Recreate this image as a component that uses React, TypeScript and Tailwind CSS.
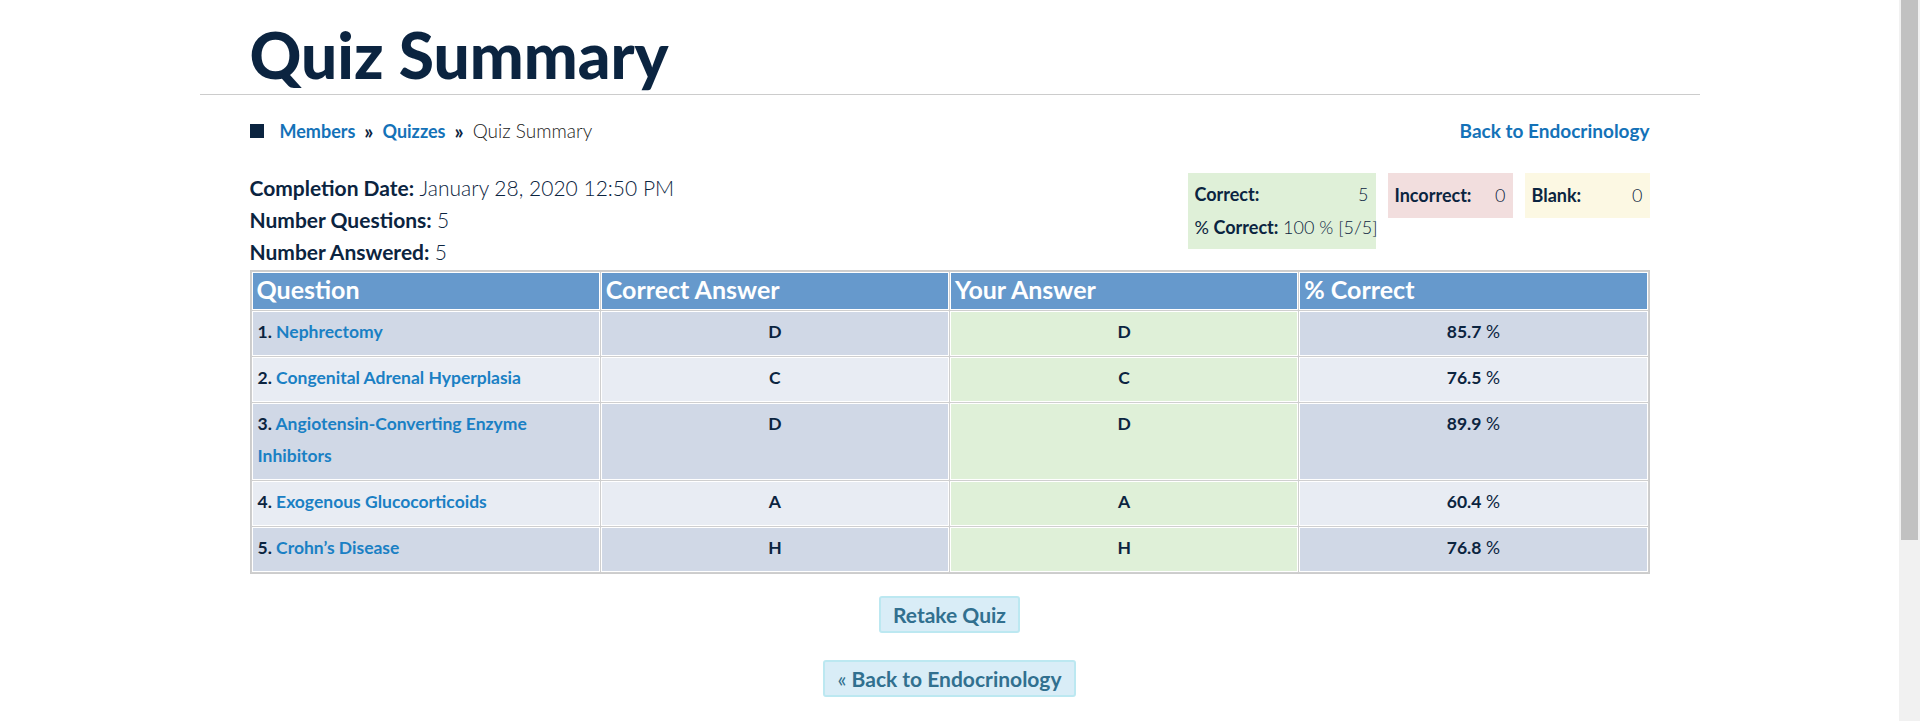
import React from "react";

const rows = [
  { n: 1, q: ["Nephrectomy"], c: "D", y: "D", p: "85.7" },
  { n: 2, q: ["Congenital Adrenal Hyperplasia"], c: "C", y: "C", p: "76.5" },
  { n: 3, q: ["Angiotensin-Converting Enzyme", "Inhibitors"], c: "D", y: "D", p: "89.9" },
  { n: 4, q: ["Exogenous Glucocorticoids"], c: "A", y: "A", p: "60.4" },
  { n: 5, q: ["Crohn\u2019s Disease"], c: "H", y: "H", p: "76.8" },
];

export default function App() {
  return (
    <div className="flex h-[721px] overflow-hidden bg-white font-['Lato',sans-serif] text-[#0b2440]">
      <div className="min-w-0 flex-1">
        <div className="mx-auto w-[1500px]">
          <h1 className="px-[50px] pt-[22px] text-[64px] leading-[66px] font-black text-[#0b2440]">
            Quiz Summary
          </h1>
          <div className="mt-[6px] h-px bg-[#cccccc]" />
          <div className="px-[50px]">
            <div className="mt-[24px] flex items-center justify-between leading-[24px] text-[18px]">
              <div className="flex items-center">
                <span className="mr-[16px] inline-block h-[14px] w-[14px] bg-[#0b2440]" />
                <a className="font-bold text-[#1472b8]">Members</a>
                <span className="mx-[9px] text-[20px] font-bold text-[#0b2440]">»</span>
                <a className="font-bold text-[#1472b8]">Quizzes</a>
                <span className="mx-[9px] text-[20px] font-bold text-[#0b2440]">»</span>
                <span className="text-[19px] font-light text-[#222]">Quiz Summary</span>
              </div>
              <a className="text-[19px] font-bold text-[#1472b8]">Back to Endocrinology</a>
            </div>

            <div className="mt-[30px] flex items-start justify-between">
              <div className="-mt-[1px] text-[21px] leading-[32px]">
                <div>
                  <span className="font-bold">Completion Date:</span>{" "}
                  <span className="font-light">January 28, 2020 12:50 PM</span>
                </div>
                <div>
                  <span className="font-bold">Number Questions:</span>{" "}
                  <span className="font-light">5</span>
                </div>
                <div>
                  <span className="font-bold">Number Answered:</span>{" "}
                  <span className="font-light">5</span>
                </div>
              </div>
              <div className="flex items-start gap-[12px] text-[18px] leading-[33px]">
                <div className="w-[188px] bg-[#dff0d8] px-[7px] py-[5px]">
                  <div className="flex justify-between">
                    <span className="font-bold">Correct:</span>
                    <span className="font-light">5</span>
                  </div>
                  <div className="whitespace-nowrap">
                    <span>%</span> <span className="font-bold">Correct:</span>{" "}
                    <span className="font-light">100 % [5/5]</span>
                  </div>
                </div>
                <div className="flex w-[125px] justify-between bg-[#f2dede] px-[7px] py-[6px]">
                  <span className="font-bold">Incorrect:</span>
                  <span className="font-light">0</span>
                </div>
                <div className="flex w-[125px] justify-between bg-[#fcf8e3] px-[7px] py-[6px]">
                  <span className="font-bold">Blank:</span>
                  <span className="font-light">0</span>
                </div>
              </div>
            </div>

            <table className="mt-[2px] w-full table-fixed border-separate border-spacing-[1px] border border-[#cccccc] bg-[#cfcfcf]">
              <thead>
                <tr>
                  {["Question", "Correct Answer", "Your Answer", "% Correct"].map((h) => (
                    <th
                      key={h}
                      className="h-[37px] border border-white bg-[#6699cc] px-[4px] pb-[4px] text-left align-top text-[25px] font-bold leading-[32px] text-white"
                    >
                      {h}
                    </th>
                  ))}
                </tr>
              </thead>
              <tbody className="text-[17.5px] font-bold leading-[32px]">
                {rows.map((r, i) => {
                  const bg = i % 2 === 0 ? "bg-[#d0d8e6]" : "bg-[#e8ecf3]";
                  return (
                    <tr key={r.n}>
                      <td className={`${bg} border border-white px-[5px] pt-[4px] pb-[7px] align-top`}>
                        {r.n}.{" "}
                        <a className="text-[#1a80c4]">
                          {r.q.map((t, k) => (
                            <React.Fragment key={k}>
                              {k > 0 && <br />}
                              {t}
                            </React.Fragment>
                          ))}
                        </a>
                      </td>
                      <td className={`${bg} border border-white px-[5px] pt-[4px] pb-[7px] text-center align-top`}>
                        {r.c}
                      </td>
                      <td className="border border-white bg-[#dff0d8] px-[5px] pt-[4px] pb-[7px] text-center align-top">
                        {r.y}
                      </td>
                      <td className={`${bg} border border-white px-[5px] pt-[4px] pb-[7px] text-center align-top`}>
                        {r.p}
                        <span className="font-normal"> %</span>
                      </td>
                    </tr>
                  );
                })}
              </tbody>
            </table>

            <div className="flex flex-col items-center">
              <button className="mt-[22px] rounded-[3px] border-2 border-[#bce8f1] bg-[#d9edf7] px-[12px] text-[21px] font-bold leading-[33px] text-[#31708f]">
                Retake Quiz
              </button>
              <button className="mt-[27px] rounded-[3px] border-2 border-[#bce8f1] bg-[#d9edf7] px-[12px] text-[21px] font-bold leading-[33px] text-[#31708f]">
                <span className="font-normal">«</span> Back to Endocrinology
              </button>
            </div>
          </div>
        </div>
      </div>
      <div className="w-[21px] shrink-0 bg-[#f1f1f1] px-[2px]">
        <div className="h-[540px] bg-[#c1c1c1]" />
      </div>
    </div>
  );
}
